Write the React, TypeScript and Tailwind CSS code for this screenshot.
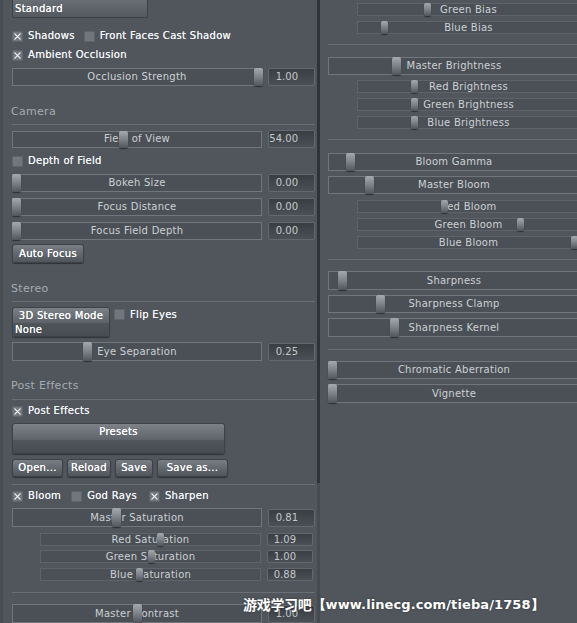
import React from "react";

const FONT = "font-['DejaVu_Sans',sans-serif]";

function Check({ checked }: { checked?: boolean }) {
  return (
    <span className="flex h-[11px] w-[11px] shrink-0 items-center justify-center rounded-[1px] border border-[#5e646a] bg-[#70767c]">
      {checked && (
        <svg width="9" height="9" viewBox="0 0 9 9">
          <path d="M1.5 1.5 L7.5 7.5 M7.5 1.5 L1.5 7.5" stroke="#e8ebed" strokeWidth="1.1" />
        </svg>
      )}
    </span>
  );
}

function CheckLabel({ checked, label }: { checked?: boolean; label: string }) {
  return (
    <span className="flex items-center gap-[5px]">
      <Check checked={checked} />
      <span className="text-[10px] leading-none tracking-[0.3px] text-[#f1f3f5] [text-shadow:0_0_0.4px_#f1f3f5]">
        {label}
      </span>
    </span>
  );
}

function Handle({ left, sub }: { left: number; sub?: boolean }) {
  return (
    <span
      className={`absolute top-[-1px] bottom-[-1px] rounded-[2px] bg-linear-to-b from-[#a3a9ae] via-[#7c8288] to-[#4f555b] shadow-[0_1px_1px_#2c3034] ${
        sub ? "w-[7px]" : "w-[9px]"
      }`}
      style={{ left }}
    />
  );
}

function Slider({
  label,
  handle,
  sub,
  className,
}: {
  label: string;
  handle: number;
  sub?: boolean;
  className?: string;
}) {
  return (
    <div
      className={`relative flex shrink-0 items-center justify-center border bg-[#4a5056] ${
        sub ? "border-[#5d6369]" : "border-[#70767c]"
      } ${className ?? ""}`}
    >
      <span className="text-[10px] leading-none tracking-[0.25px] text-[#cdd1d5]">{label}</span>
      <Handle left={handle} sub={sub} />
    </div>
  );
}

function Value({ value, sub }: { value: string; sub?: boolean }) {
  return (
    <div
      className={`flex shrink-0 items-center justify-end rounded-[2px] border border-[#62686e] bg-linear-to-b from-[#393e43] to-[#4b5056] text-[10px] leading-none text-[#c3c8cc] ${
        sub ? "h-[13px] w-[46px] pr-[16px]" : "h-[18px] w-[47px] pr-[16px]"
      }`}
    >
      {value}
    </div>
  );
}

function MainRow({
  label,
  handle,
  value,
  className,
  h = "h-[18px]",
}: {
  label: string;
  handle: number;
  value: string;
  className?: string;
  h?: string;
}) {
  return (
    <div className={`flex items-center gap-[6px] pl-[12px] ${className ?? ""}`}>
      <Slider label={label} handle={handle} className={`${h} w-[250px]`} />
      <Value value={value} />
    </div>
  );
}

function SubRow({
  label,
  handle,
  value,
  className,
}: {
  label: string;
  handle: number;
  value: string;
  className?: string;
}) {
  return (
    <div className={`flex items-center gap-[6px] pl-[40px] ${className ?? ""}`}>
      <Slider label={label} handle={handle} sub className="h-[13px] w-[221px]" />
      <Value value={value} sub />
    </div>
  );
}

function Btn({ label, className }: { label: string; className?: string }) {
  return (
    <button
      className={`flex h-[18px] shrink-0 items-center justify-center rounded-[3px] border border-[#3d4247] bg-linear-to-b from-[#787e84] to-[#4f555b] text-[10px] leading-none tracking-[0.3px] text-white shadow-[0_1px_1px_#2e3236] [text-shadow:0_0_0.4px_#ffffff] ${
        className ?? ""
      }`}
    >
      {label}
    </button>
  );
}

function Header({ label, className }: { label: string; className?: string }) {
  return (
    <div className={`flex h-[14px] items-center pl-[11px] text-[11px] leading-none tracking-[0.3px] text-[#a5abb0] ${className ?? ""}`}>
      {label}
    </div>
  );
}

function Line({ className }: { className?: string }) {
  return <div className={`h-px shrink-0 bg-[#696f75] ${className ?? ""}`} />;
}

export default function App() {
  return (
    <div className={`relative flex h-[623px] w-[577px] overflow-hidden bg-[#50565c] ${FONT}`}>
      {/* Left panel */}
      <div className="flex w-[317px] shrink-0 flex-col shadow-[inset_3px_0_0_#484d53]">
        <div className="pl-[12px]">
          <div className="flex h-[18px] w-[136px] items-center rounded-b-[2px] border border-t-0 border-[#3d4247] bg-linear-to-b from-[#686e74] to-[#53595f] pl-[2px] pt-[1px] text-[10px] leading-none tracking-[0.3px] text-white [text-shadow:0_0_0.4px_#ffffff]">
            Standard
          </div>
        </div>

        <div className="mt-[11px] flex h-[14px] items-center pl-[12px]">
          <CheckLabel checked label="Shadows" />
          <span className="ml-[9px]">
            <CheckLabel label="Front Faces Cast Shadow" />
          </span>
        </div>
        <div className="mt-[5px] flex h-[14px] items-center pl-[12px]">
          <CheckLabel checked label="Ambient Occlusion" />
        </div>
        <MainRow label="Occlusion Strength" handle={241} value="1.00" className="mt-[6px]" />

        <Header label="Camera" className="mt-[18px]" />
        <Line className="ml-[12px] mr-[2px] mt-[6px]" />
        <MainRow label="Field of View" handle={106} value="54.00" className="mt-[5px]" h="h-[17px]" />
        <div className="mt-[6px] flex h-[14px] items-center pl-[12px]">
          <CheckLabel label="Depth of Field" />
        </div>
        <MainRow label="Bokeh Size" handle={-1} value="0.00" className="mt-[6px]" />
        <MainRow label="Focus Distance" handle={-1} value="0.00" className="mt-[6px]" />
        <MainRow label="Focus Field Depth" handle={-1} value="0.00" className="mt-[6px]" />
        <div className="mt-[4px] pl-[12px]">
          <Btn label="Auto Focus" className="h-[19px] w-[72px]" />
        </div>

        <Header label="Stereo" className="mt-[18px]" />
        <Line className="ml-[12px] mr-[2px] mt-[6px]" />
        <div className="mt-[5px] flex h-[30px] items-start gap-[4px] pl-[12px]">
          <div className="flex h-[30px] w-[98px] flex-col overflow-hidden rounded-[3px] border border-[#3d4247] text-[10px] leading-none tracking-[0.3px] text-white shadow-[0_1px_1px_#2e3236] [text-shadow:0_0_0.4px_#ffffff]">
            <div className="flex h-[15px] items-center justify-center bg-linear-to-b from-[#7a8086] to-[#5c6268]">
              3D Stereo Mode
            </div>
            <div className="flex flex-1 items-center bg-linear-to-b from-[#4f555b] to-[#464c52] pl-[2px]">None</div>
          </div>
          <span className="mt-[2px]">
            <CheckLabel label="Flip Eyes" />
          </span>
        </div>
        <MainRow label="Eye Separation" handle={70} value="0.25" className="mt-[5px]" h="h-[19px]" />

        <Header label="Post Effects" className="mt-[17px]" />
        <Line className="ml-[12px] mr-[2px] mt-[7px]" />
        <div className="mt-[4px] flex h-[14px] items-center pl-[12px]">
          <CheckLabel checked label="Post Effects" />
        </div>
        <div className="mt-[5px] pl-[12px]">
          <div className="flex h-[31px] w-[213px] flex-col overflow-hidden rounded-[3px] border border-[#3d4247] text-[10px] leading-none tracking-[0.3px] text-white shadow-[0_1px_1px_#2e3236] [text-shadow:0_0_0.4px_#ffffff]">
            <div className="flex h-[16px] items-center justify-center bg-linear-to-b from-[#7c8288] to-[#5e646a]">
              Presets
            </div>
            <div className="flex-1 bg-linear-to-b from-[#50565c] to-[#454b51]" />
          </div>
        </div>
        <div className="mt-[5px] flex gap-[4px] pl-[12px]">
          <Btn label="Open..." className="w-[51px]" />
          <Btn label="Reload" className="w-[44px]" />
          <Btn label="Save" className="w-[38px]" />
          <Btn label="Save as..." className="w-[71px]" />
        </div>
        <Line className="ml-[12px] mr-[2px] mt-[7px]" />
        <div className="mt-[4px] flex h-[14px] items-center pl-[12px]">
          <CheckLabel checked label="Bloom" />
          <span className="ml-[10px]">
            <CheckLabel label="God Rays" />
          </span>
          <span className="ml-[12px]">
            <CheckLabel checked label="Sharpen" />
          </span>
        </div>
        <MainRow label="Master Saturation" handle={99} value="0.81" className="mt-[5px]" h="h-[19px]" />
        <SubRow label="Red Saturation" handle={116} value="1.09" className="mt-[6px]" />
        <SubRow label="Green Saturation" handle={107} value="1.00" className="mt-[4px]" />
        <SubRow label="Blue Saturation" handle={95} value="0.88" className="mt-[5px]" />
        <Line className="ml-[12px] mr-[2px] mt-[11px]" />
        <MainRow label="Master Contrast" handle={120} value="1.00" className="mt-[11px]" h="h-[19px]" />
      </div>

      {/* Divider */}
      <div className="flex w-[3px] shrink-0 flex-col">
        <div className="h-[483px] bg-[#2e3337]" />
        <div className="flex-1 bg-[#464b51]" />
      </div>

      {/* Right panel */}
      <div className="flex flex-1 flex-col overflow-hidden pl-[8px]">
        <Slider label="Green Bias" handle={66} sub className="ml-[29px] mt-[3px] h-[13px] w-[223px]" />
        <Slider label="Blue Bias" handle={23} sub className="ml-[29px] mt-[5px] h-[13px] w-[223px]" />
        <Line className="mt-[10px] w-[260px]" />
        <Slider label="Master Brightness" handle={63} className="mt-[12px] h-[18px] w-[252px]" />
        <Slider label="Red Brightness" handle={53} sub className="ml-[29px] mt-[5px] h-[13px] w-[223px]" />
        <Slider label="Green Brightness" handle={53} sub className="ml-[29px] mt-[5px] h-[13px] w-[223px]" />
        <Slider label="Blue Brightness" handle={53} sub className="ml-[29px] mt-[5px] h-[13px] w-[223px]" />
        <Line className="mt-[10px] w-[260px]" />
        <Slider label="Bloom Gamma" handle={17} className="mt-[13px] h-[18px] w-[252px]" />
        <Slider label="Master Bloom" handle={36} className="mt-[5px] h-[18px] w-[252px]" />
        <Slider label="Red Bloom" handle={83} sub className="ml-[29px] mt-[6px] h-[13px] w-[223px]" />
        <Slider label="Green Bloom" handle={159} sub className="ml-[29px] mt-[5px] h-[13px] w-[223px]" />
        <Slider label="Blue Bloom" handle={213} sub className="ml-[29px] mt-[5px] h-[13px] w-[223px]" />
        <Line className="mt-[10px] w-[260px]" />
        <Slider label="Sharpness" handle={9} className="mt-[11px] h-[19px] w-[252px]" />
        <Slider label="Sharpness Clamp" handle={47} className="mt-[5px] h-[18px] w-[252px]" />
        <Slider label="Sharpness Kernel" handle={61} className="mt-[5px] h-[19px] w-[252px]" />
        <Line className="mt-[12px] w-[260px]" />
        <Slider label="Chromatic Aberration" handle={-1} className="mt-[11px] h-[18px] w-[252px]" />
        <Slider label="Vignette" handle={-1} className="mt-[5px] h-[19px] w-[252px]" />
      </div>

      {/* Watermark */}
      <div className="absolute left-[243px] top-[597px] flex items-center gap-[1px] font-bold text-white [text-shadow:0_0_2px_#2a2e32]">
        <span className="font-['Noto_Sans_CJK_SC',sans-serif] text-[14px] leading-none tracking-[-0.3px]">游戏学习吧</span>
        <span className="font-['DejaVu_Sans',sans-serif] text-[13px] leading-none tracking-[0.1px]">【www.linecg.com/tieba/1758】</span>
      </div>
    </div>
  );
}
